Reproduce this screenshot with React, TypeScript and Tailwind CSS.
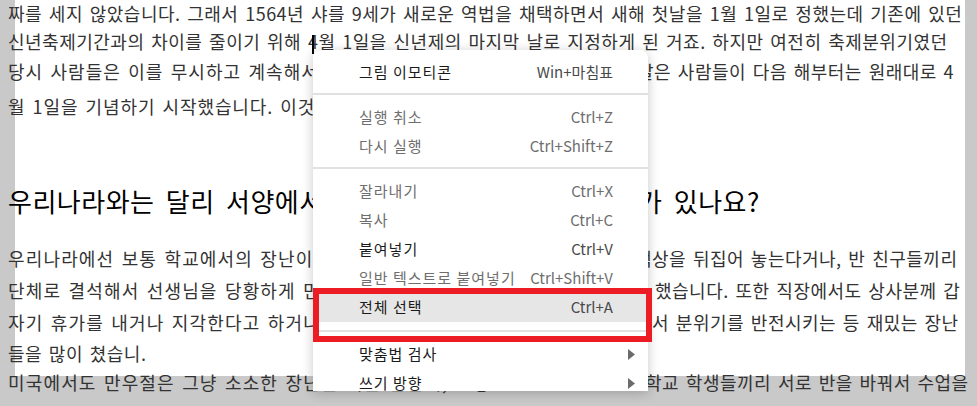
import React from "react";

const bodyFont = { fontFamily: '"Noto Sans CJK KR", "Noto Sans", sans-serif' };

type Item =
  | { kind: "item"; label: string; shortcut?: string; disabled?: boolean; active?: boolean; arrow?: boolean }
  | { kind: "sep"; cls: string };

const items: Item[] = [
  { kind: "item", label: "그림 이모티콘", shortcut: "Win+마침표" },
  { kind: "sep", cls: "h-[16px] pt-[6px]" },
  { kind: "item", label: "실행 취소", shortcut: "Ctrl+Z", disabled: true },
  { kind: "item", label: "다시 실행", shortcut: "Ctrl+Shift+Z", disabled: true },
  { kind: "sep", cls: "h-[16px] pt-[6px]" },
  { kind: "item", label: "잘라내기", shortcut: "Ctrl+X", disabled: true },
  { kind: "item", label: "복사", shortcut: "Ctrl+C", disabled: true },
  { kind: "item", label: "붙여넣기", shortcut: "Ctrl+V" },
  { kind: "item", label: "일반 텍스트로 붙여넣기", shortcut: "Ctrl+Shift+V", disabled: true },
  { kind: "item", label: "전체 선택", shortcut: "Ctrl+A", active: true },
  { kind: "sep", cls: "h-[18px] pt-[8px]" },
  { kind: "item", label: "맞춤법 검사", arrow: true },
  { kind: "item", label: "쓰기 방향", arrow: true },
];

function Menu() {
  return (
    <div
      className="absolute left-[313px] top-[50px] w-[335px] h-[341px] overflow-hidden rounded-t-[8px] bg-white shadow-[0_2px_12px_rgba(0,0,0,0.22)] pt-2 text-[15px]"
      style={bodyFont}
    >
      {items.map((it, i) =>
        it.kind === "sep" ? (
          <div key={i} className={it.cls}>
            <div className="h-[2px] bg-[#e1e1e1]" />
          </div>
        ) : (
          <div
            key={i}
            className={"h-[29px] flex items-center pl-[46px] pr-[35px] " + (it.active ? "bg-[#e6e6e6]" : "")}
          >
            <span className={"flex-1 tracking-[1px] " + (it.disabled ? "text-[#6e6e6e]" : "text-[#1a1a1a]")}>
              {it.label}
            </span>
            {it.shortcut && (
              <span className={it.disabled ? "text-[#6e6e6e]" : "text-[#4a4a4a]"}>{it.shortcut}</span>
            )}
            {it.arrow && (
              <svg width="7" height="11" viewBox="0 0 7 11" className="mr-[-22px]">
                <path d="M0 0 L7 5.5 L0 11 Z" fill="#6b6b6b" />
              </svg>
            )}
          </div>
        )
      )}
    </div>
  );
}

function Line({
  h,
  left,
  leftCls,
  right,
  rightPad,
}: {
  h: string;
  left: string;
  leftCls?: string;
  right?: string;
  rightPad?: string;
}) {
  return (
    <div className={"flex items-center whitespace-nowrap " + h}>
      {right ? (
        <>
          <span className={"w-[632px] shrink-0 overflow-hidden " + (leftCls ?? "")}>{left}</span>
          <span className={rightPad}>{right}</span>
        </>
      ) : (
        <span className={leftCls}>{left}</span>
      )}
    </div>
  );
}

export default function App() {
  return (
    <div className="relative w-[977px] h-[406px] overflow-hidden bg-[#c9c9c9]" style={bodyFont}>
      <div className="ml-[15px] mt-[15px] w-[950px] h-[376px] bg-white">
        <div className="-ml-[7px] -mt-[15px] w-[970px] text-[18px] tracking-[0.5px] [word-spacing:2.2px] text-[#333333]">
          <Line
            h="h-[27px]"
            left="짜를 세지 않았습니다. 그래서 1564년 샤를 9세가 새로운 역법을 채택하면서 새해 첫날을 1월 1일로 정했는데 기존에 있던"
          />
          <Line
            h="h-[29px]"
            left="신년축제기간과의 차이를 줄이기 위해 4월 1일을 신년제의 마지막 날로 지정하게 된 거죠. 하지만 여전히 축제분위기였던"
          />
          <Line
            h="h-[30px]"
            left="당시 사람들은 이를 무시하고 계속해서 4월 1일에 새해 축제를 즐겼고, 이와"
            leftCls="tracking-[1.05px]"
            right="달은 사람들이 다음 해부터는 원래대로 4"
            rightPad="-ml-[3px]"
          />
          <Line
            h="h-[40px]"
            left="월 1일을 기념하기 시작했습니다. 이것이 만우절의 시작이 되었다고 합니다."
            leftCls="tracking-[0.9px]"
            right=" "
          />
          <div className="mt-[52px] h-[44px] flex items-center whitespace-nowrap text-[26px] tracking-[0.5px] [word-spacing:5px] text-black">
            <span className="w-[632px] shrink-0 overflow-hidden">우리나라와는 달리 서양에서는 어떤 만우절 장난이</span>
            <span className="-ml-[2px]">가 있나요?</span>
          </div>
          <div className="mt-[20px]">
            <Line
              h="h-[32px]"
              left="우리나라에선 보통 학교에서의 장난이 대부분인데, 교실을 바꾸거나 책"
              leftCls="tracking-[1.15px]"
              right="책상을 뒤집어 놓는다거나, 반 친구들끼리"
              rightPad="-ml-[5px]"
            />
            <Line
              h="h-[32px]"
              left="단체로 결석해서 선생님을 당황하게 만들기도 했습니다. 또한"
              leftCls="tracking-[1.15px]"
              right="했습니다. 또한 직장에서도 상사분께 갑"
              rightPad="pl-[15px]"
            />
            <Line
              h="h-[32px]"
              left="자기 휴가를 내거나 지각한다고 하거나 퇴사한다고 말해"
              leftCls="tracking-[1.15px]"
              right="해서 분위기를 반전시키는 등 재밌는 장난"
              rightPad="-ml-[5px]"
            />
            <Line h="h-[30px]" left="들을 많이 쳤습니." />
            <Line
              h="h-[28px]"
              left="미국에서도 만우절은 그냥 소소한 장난을 치는 날인데, 고등"
              leftCls="tracking-[1.15px]"
              right="학교 학생들끼리 서로 반을 바꿔서 수업을"
              rightPad="pl-[5px]"
            />
          </div>
        </div>
      </div>

      {/* text caret */}
      <div className="absolute left-[312px] top-[35px] w-[2px] h-[19px] bg-black" />

      <Menu />

      {/* red annotation box */}
      <div className="absolute left-[313px] top-[288px] w-[339px] h-[54px] border-[6px] border-[#ed1c24]" />
    </div>
  );
}
